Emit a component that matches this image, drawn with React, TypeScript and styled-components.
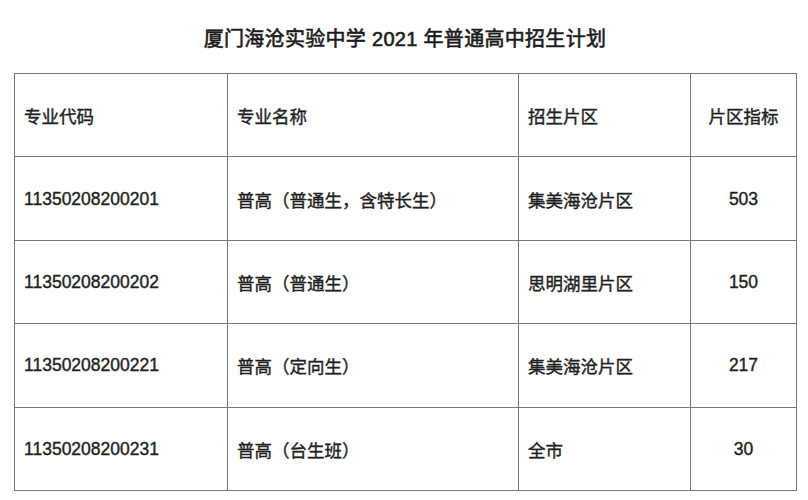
import React from "react";
import styled, { createGlobalStyle } from "styled-components";

const GlobalStyle = createGlobalStyle`
  html, body {
    margin: 0;
    padding: 0;
    background: #ffffff;
  }
  body {
    font-family: "Liberation Sans", "Noto Sans CJK SC", sans-serif;
    color: #1f1f1f;
  }
`;

const Page = styled.div`
  width: 808px;
  height: 500px;
  box-sizing: border-box;
  padding: 0 12px 0 14px;
  display: flex;
  flex-direction: column;
  background: #fff;
`;

const Title = styled.h1`
  margin: 0;
  height: 73px;
  display: flex;
  align-items: center;
  justify-content: center;
  padding-top: 1px;
  box-sizing: border-box;
  font-family: "Liberation Sans", "Noto Sans CJK SC", sans-serif;
  font-size: 20px;
  font-weight: 400;
  -webkit-text-stroke: 0.6px #1c1c1c;
  color: #1c1c1c;
  letter-spacing: 0.3px;
`;

const Table = styled.table`
  width: 782px;
  border-collapse: collapse;
  table-layout: fixed;
`;

const Row = styled.tr`
  height: 83.4px;
`;

const Cell = styled.td<{ $center?: boolean }>`
  border: 1px solid #767676;
  font-size: 17.5px;
  font-weight: 400;
  -webkit-text-stroke: 0.4px #1f1f1f;
  color: #1f1f1f;
  text-align: ${(p) => (p.$center ? "center" : "left")};
  padding: 1px 0 0 ${(p) => (p.$center ? "0" : "9px")};
  vertical-align: middle;
  white-space: nowrap;
`;

const widths = [213, 291, 172, 106];

const header = ["专业代码", "专业名称", "招生片区", "片区指标"];

const rows = [
  ["11350208200201", "普高（普通生，含特长生）", "集美海沧片区", "503"],
  ["11350208200202", "普高（普通生）", "思明湖里片区", "150"],
  ["11350208200221", "普高（定向生）", "集美海沧片区", "217"],
  ["11350208200231", "普高（台生班）", "全市", "30"],
];

export default function App() {
  return (
    <>
      <GlobalStyle />
      <Page>
        <Title>厦门海沧实验中学 2021 年普通高中招生计划</Title>
        <Table>
          <colgroup>
            {widths.map((w, i) => (
              <col key={i} style={{ width: w }} />
            ))}
          </colgroup>
          <tbody>
            <Row>
              {header.map((h, i) => (
                <Cell key={i} $center={i === 3}>
                  {h}
                </Cell>
              ))}
            </Row>
            {rows.map((r, ri) => (
              <Row key={ri}>
                {r.map((c, ci) => (
                  <Cell key={ci} $center={ci === 3}>
                    {c}
                  </Cell>
                ))}
              </Row>
            ))}
          </tbody>
        </Table>
      </Page>
    </>
  );
}
